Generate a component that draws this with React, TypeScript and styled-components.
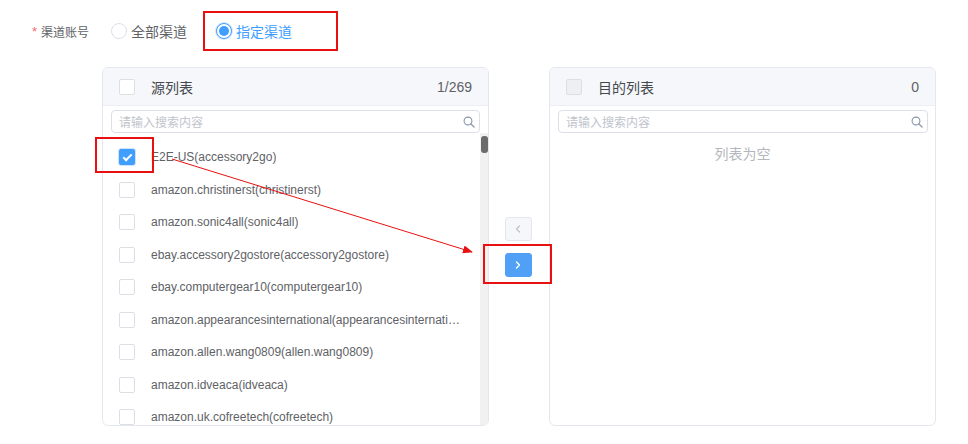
import { FC } from "react";
import styled, { createGlobalStyle } from "styled-components";

const GlobalStyle = createGlobalStyle`
	html, body {
		margin: 0;
		padding: 0;
		background: #fff;
	}
	body {
		font-family: "Liberation Sans", "Noto Sans CJK SC", Arial, sans-serif;
		color: #606266;
	}
`;

const sourceItems = [
	"E2E-US(accessory2go)",
	"amazon.christinerst(christinerst)",
	"amazon.sonic4all(sonic4all)",
	"ebay.accessory2gostore(accessory2gostore)",
	"ebay.computergear10(computergear10)",
	"amazon.appearancesinternational(appearancesinternational)",
	"amazon.allen.wang0809(allen.wang0809)",
	"amazon.idveaca(idveaca)",
	"amazon.uk.cofreetech(cofreetech)",
];

//Search icon
const SearchIcon = () => (
	<svg width="12" height="12" viewBox="0 0 12 12" fill="none">
		<circle cx="5" cy="5" r="3.9" stroke="#8a96a8" strokeWidth="1.1" />
		<path d="M7.9 7.9 L11 11" stroke="#8a96a8" strokeWidth="1.3" strokeLinecap="round" />
	</svg>
);

const Chevron: FC<{ dir: "left" | "right"; color: string }> = ({ dir, color }) => (
	<svg width="8" height="8" viewBox="0 0 8 8" fill="none">
		<path
			d={dir === "left" ? "M5.5 1 L2.5 4 L5.5 7" : "M2.5 1 L5.5 4 L2.5 7"}
			stroke={color}
			strokeWidth="1.4"
			strokeLinecap="round"
			strokeLinejoin="round"
		/>
	</svg>
);

const App: FC = () => {
	return (
		<>
			<GlobalStyle />
			<Page>
				<FormRow>
					<Label>
						<Required>*</Required>渠道账号
					</Label>
					<RadioOption>
						<RadioDot />
						<span>全部渠道</span>
					</RadioOption>
					<Highlight>
						<RadioOption $checked>
							<RadioDot $checked />
							<span>指定渠道</span>
						</RadioOption>
					</Highlight>
				</FormRow>

				<Transfer>
					<Panel>
						<PanelHeader>
							<CheckBox />
							<HeaderTitle>源列表</HeaderTitle>
							<Count>1/269</Count>
						</PanelHeader>
						<SearchWrap>
							<SearchBox>
								<Placeholder>请输入搜索内容</Placeholder>
								<SearchIcon />
							</SearchBox>
						</SearchWrap>
						<ListBody>
							<List>
								{sourceItems.map((item, i) => (
									<Item key={item}>
										<CheckBox $checked={i === 0} />
										<ItemText>{item}</ItemText>
									</Item>
								))}
							</List>
							<ScrollTrack>
								<ScrollThumb />
							</ScrollTrack>
						</ListBody>
					</Panel>

					<Buttons>
						<ArrowButton disabled>
							<Chevron dir="left" color="#c0c4cc" />
						</ArrowButton>
						<ArrowButton $primary>
							<Chevron dir="right" color="#fff" />
						</ArrowButton>
					</Buttons>

					<Panel>
						<PanelHeader>
							<CheckBox $disabled />
							<HeaderTitle>目的列表</HeaderTitle>
							<Count>0</Count>
						</PanelHeader>
						<SearchWrap $right>
							<SearchBox>
								<Placeholder>请输入搜索内容</Placeholder>
								<SearchIcon />
							</SearchBox>
						</SearchWrap>
						<Empty>列表为空</Empty>
					</Panel>
				</Transfer>

				{/* annotation overlay */}
				<Annotations width="968" height="444" viewBox="0 0 968 444">
					<defs>
						<marker id="head" markerWidth="10" markerHeight="8" refX="9" refY="4" orient="auto" markerUnits="userSpaceOnUse">
							<path d="M0 0 L10 4 L0 8 Z" fill="#e8110f" />
						</marker>
					</defs>
					<rect x="96" y="138" width="57" height="34" fill="none" stroke="#e8110f" strokeWidth="2" />
					<rect x="484" y="245" width="67" height="38" fill="none" stroke="#e8110f" strokeWidth="2" />
					<line x1="172" y1="159" x2="472" y2="252" stroke="#e8110f" strokeWidth="1" markerEnd="url(#head)" />
				</Annotations>
			</Page>
		</>
	);
};

const Page = styled.div`
	position: relative;
	width: 968px;
	height: 444px;
	padding: 11px 0 0 32px;
	box-sizing: border-box;
	overflow: hidden;
`;

const FormRow = styled.div`
	display: flex;
	align-items: center;
	height: 40px;
`;

const Label = styled.div`
	font-size: 12px;
	color: #606266;
	margin-right: 22px;
	display: flex;
	align-items: center;
`;

const Required = styled.span`
	color: #f56c6c;
	margin-right: 4px;
	font-size: 13px;
`;

const RadioOption = styled.label<{ $checked?: boolean }>`
	display: flex;
	align-items: center;
	gap: 4px;
	font-size: 14px;
	color: ${(p) => (p.$checked ? "#409eff" : "#606266")};
	margin-right: 16px;
`;

const RadioDot = styled.span<{ $checked?: boolean }>`
	width: 16px;
	height: 16px;
	box-sizing: border-box;
	border-radius: 50%;
	border: 1px solid ${(p) => (p.$checked ? "#409eff" : "#dcdfe6")};
	background: #fff;
	display: inline-flex;
	align-items: center;
	justify-content: center;
	box-shadow: ${(p) => (p.$checked ? "0 0 0 1px #d3e6fc" : "none")};
	&::after {
		content: "";
		width: 10px;
		height: 10px;
		border-radius: 50%;
		background: #409eff;
		display: ${(p) => (p.$checked ? "block" : "none")};
	}
`;

const Highlight = styled.div`
	border: 2px solid #e8110f;
	height: 40px;
	box-sizing: border-box;
	display: flex;
	align-items: center;
	padding: 0 28px 0 11px;
	margin-left: 0;
`;

const Transfer = styled.div`
	display: flex;
	margin: 16px 0 0 70px;
`;

const Panel = styled.div`
	width: 387px;
	height: 359px;
	box-sizing: border-box;
	border: 1px solid #e4e7ed;
	border-radius: 6px;
	overflow: hidden;
	display: flex;
	flex-direction: column;
	background: #fff;
`;

const PanelHeader = styled.div`
	height: 37px;
	flex-shrink: 0;
	background: #f5f7fa;
	border-bottom: 1px solid #ebeef5;
	display: flex;
	align-items: center;
	padding: 0 16px;
`;

const CheckBox = styled.span<{ $checked?: boolean; $disabled?: boolean }>`
	width: 16px;
	height: 16px;
	box-sizing: border-box;
	flex-shrink: 0;
	border-radius: 2px;
	border: 1px solid ${(p) => (p.$checked ? "#409eff" : "#dcdfe6")};
	background: ${(p) => (p.$checked ? "#409eff" : p.$disabled ? "#edf0f3" : "#fff")};
	box-shadow: ${(p) => (p.$checked ? "0 0 0 1px #cfe3fb" : "none")};
	position: relative;
	margin-right: 16px;
	&::after {
		content: "";
		display: ${(p) => (p.$checked ? "block" : "none")};
		position: absolute;
		left: 5px;
		top: 2px;
		width: 3px;
		height: 7px;
		border: solid #fff;
		border-width: 0 2px 2px 0;
		transform: rotate(45deg);
	}
`;

const HeaderTitle = styled.span`
	font-size: 14px;
	color: #45484d;
	flex: 1;
`;

const Count = styled.span`
	font-size: 14px;
	color: #606266;
`;

const SearchWrap = styled.div<{ $right?: boolean }>`
	padding: 4px ${(p) => (p.$right ? "7px" : "8px")} 0 8px;
	flex-shrink: 0;
`;

const SearchBox = styled.div`
	height: 23px;
	box-sizing: border-box;
	border: 1px solid #dcdfe6;
	border-radius: 4px;
	display: flex;
	align-items: center;
	justify-content: space-between;
	padding: 0 4px 0 7px;
`;

const Placeholder = styled.span`
	font-size: 12px;
	color: #c0c4cc;
`;

const ListBody = styled.div`
	flex: 1;
	display: flex;
	min-height: 0;
`;

const List = styled.div`
	flex: 1;
	min-width: 0;
	padding-top: 8px;
	overflow: hidden;
`;

const Item = styled.div`
	height: 32.5px;
	display: flex;
	align-items: center;
	padding: 0 17px 0 16px;
`;

const ItemText = styled.span`
	font-size: 12px;
	color: #606266;
	white-space: nowrap;
	overflow: hidden;
	text-overflow: ellipsis;
`;

const ScrollTrack = styled.div`
	width: 8px;
	background: #f1f1f1;
	padding-top: 3px;
	box-sizing: border-box;
`;

const ScrollThumb = styled.div`
	width: 7px;
	height: 17px;
	margin-left: 1px;
	border-radius: 3px;
	background: #6b6b6b;
`;

const Buttons = styled.div`
	width: 60px;
	display: flex;
	flex-direction: column;
	align-items: center;
	justify-content: center;
	gap: 12px;
	padding-right: 2px;
	box-sizing: border-box;
`;

const ArrowButton = styled.button<{ $primary?: boolean }>`
	width: 27px;
	height: 24px;
	padding: 0;
	border-radius: 3px;
	border: 1px solid ${(p) => (p.$primary ? "#50a1f5" : "#e4e7ed")};
	background: ${(p) => (p.$primary ? "#50a1f5" : "#f5f7fa")};
	display: flex;
	align-items: center;
	justify-content: center;
`;

const Empty = styled.div`
	text-align: center;
	font-size: 14px;
	color: #b4b7bd;
	margin-top: 10px;
`;

const Annotations = styled.svg`
	position: absolute;
	left: 0;
	top: 0;
	pointer-events: none;
`;

export default App;
